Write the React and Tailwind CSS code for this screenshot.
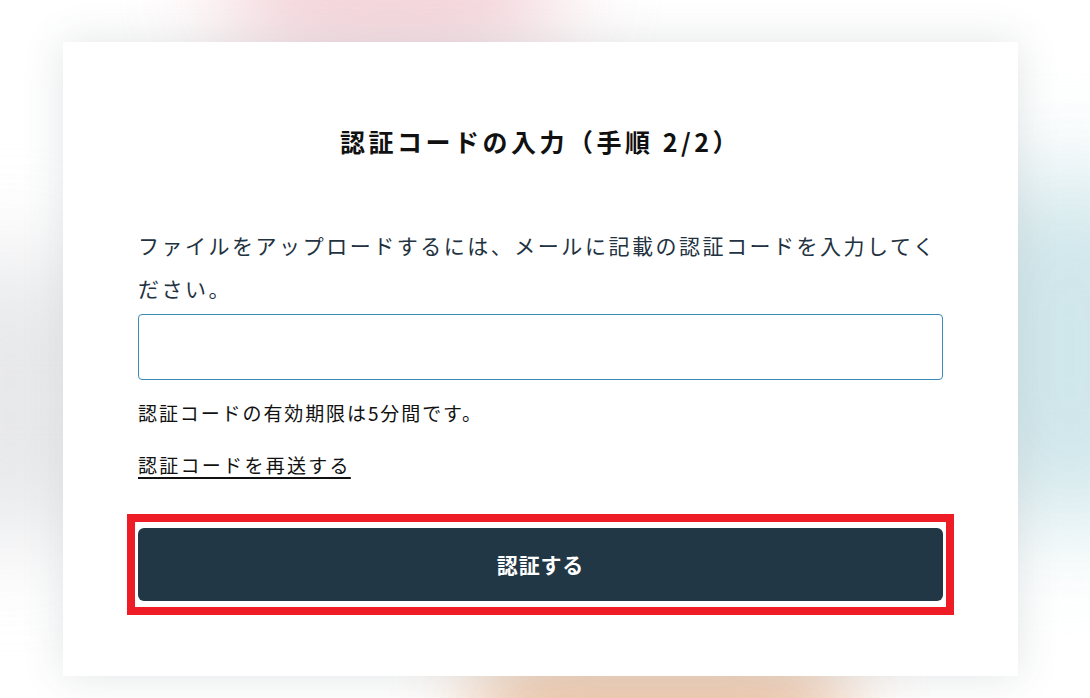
export default function App() {
  const font = { fontFamily: '"Noto Sans CJK JP", "Noto Sans", sans-serif' };
  return (
    <div className="relative w-[1090px] h-[698px] overflow-hidden bg-white" style={font}>
      {/* decorative background blobs */}
      <div className="absolute left-[220px] top-[-110px] w-[340px] h-[170px] rounded-full bg-[#efc6ce] blur-[50px] opacity-80" />
      <div className="absolute left-[970px] top-[170px] w-[200px] h-[360px] rounded-full bg-[#c9e3e8] blur-[50px] opacity-90" />
      <div className="absolute left-[470px] top-[655px] w-[380px] h-[120px] rounded-full bg-[#eabd9c] blur-[40px] opacity-90" />
      <div className="absolute left-[-60px] top-[250px] w-[140px] h-[300px] rounded-full bg-[#d9dadd] blur-[50px] opacity-70" />

      <div className="relative flex flex-col w-[955px] ml-[63px] mt-[42px] bg-white px-[75px] pt-[81px] pb-[75px] shadow-[0_0_40px_rgba(60,70,80,0.14)]">
        <h1 className="text-center text-[25px] leading-[36px] font-bold tracking-[0.14em] text-[#111111]">
          認証コードの入力（手順 2/2）
        </h1>
        <p className="mt-[65px] text-[21px] leading-[43px] tracking-[0.12em] text-[#233240]">
          ファイルをアップロードするには、メールに記載の認証コードを入力してください。
        </p>
        <input
          type="text"
          className="mt-[4px] h-[66px] w-full rounded-[4px] border border-[#3b8bb9] bg-white px-4 outline-none"
        />
        <p className="mt-[18px] text-[19px] leading-[30px] tracking-[0.1em] text-[#111111]">
          認証コードの有効期限は5分間です。
        </p>
        <div className="mt-[22px] flex">
          <a href="#" className="text-[19px] leading-[30px] tracking-[0.12em] text-[#111111] underline underline-offset-[4px] decoration-[2px]">
            認証コードを再送する
          </a>
        </div>
        <div className="relative mt-[48px]">
          <button className="flex h-[73px] w-full items-center justify-center rounded-[6px] bg-[#223746] text-[21px] font-bold tracking-[0.04em] text-white">
            認証する
          </button>
          <div className="pointer-events-none absolute inset-x-[-11px] inset-y-[-14px] border-[8px] border-[#ee1c25]" />
        </div>
      </div>
    </div>
  );
}
